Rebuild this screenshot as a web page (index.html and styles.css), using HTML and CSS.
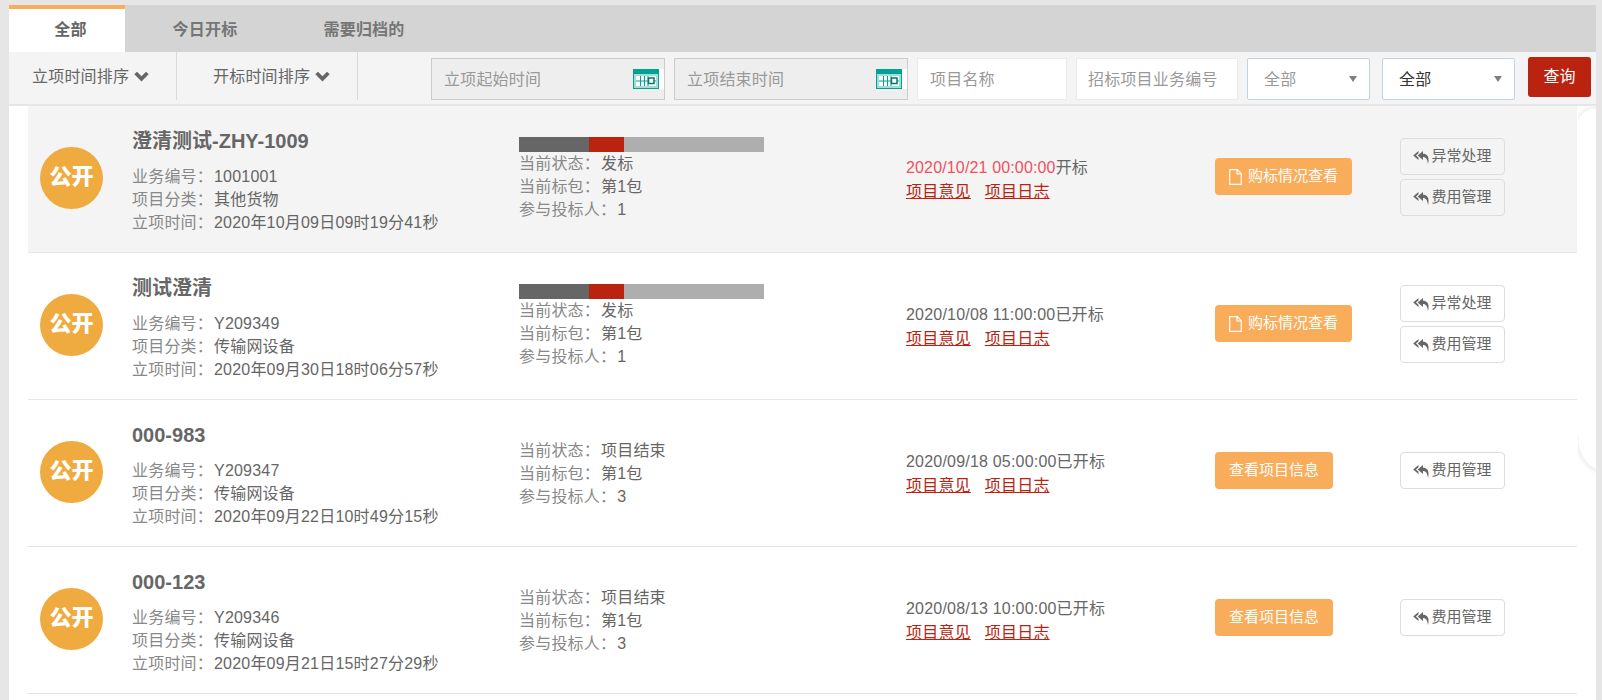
FILE: index.html
```html
<!DOCTYPE html>
<html lang="zh-CN">
<head>
<meta charset="utf-8">
<title>项目列表</title>
<link rel="stylesheet" href="styles.css">
</head>
<body>
<svg class="defs" width="0" height="0" aria-hidden="true">
  <symbol id="i-chev" viewBox="0 0 14 10"><path d="M0.300 3 2.800 .5 7 4.700 11.200 .5 13.700 3 7 9.700z"/></symbol>
  <symbol id="i-cal" viewBox="0 0 26 20">
    <rect width="26" height="20" fill="#00a294"/>
    <rect x="1" y="5" width="24" height="14" fill="#a5dcd6"/>
    <rect x="3" y="7" width="20" height="10" fill="#fff"/>
    <path d="M3 12H23M7.500 7V17M11.500 7V17M15 7V17" stroke="#00a294" stroke-width="1"/>
    <rect x="15.500" y="9" width="5.500" height="5.500" fill="#fff" stroke="#00786e" stroke-width="1.500"/>
  </symbol>
  <symbol id="i-reply" viewBox="0 0 16 14"><path d="M5.500 1 .2 5.500 5.500 10V7.800L3 5.500 5.500 3.200zM10 1 4.700 5.500 10 10V7C13 7 14.300 9 15 14 16.500 8 15 3.800 10 3.800z" fill="currentColor"/></symbol>
  <symbol id="i-file" viewBox="0 0 13 16"><path d="M.7.700H8.300L12.300 4.700V15.300H.7zM8 .7V5H12.300" fill="none" stroke="currentColor" stroke-width="1.200"/></symbol>
</svg>
<main class="page">
  <nav class="tabs">
    <a class="tab tab-active">全部</a>
    <a class="tab tab-today">今日开标</a>
    <a class="tab tab-archive">需要归档的</a>
  </nav>
  <section class="filters">
    <div class="sort sort-first">立项时间排序 <svg class="chev"><use href="#i-chev"/></svg></div>
    <div class="sort sort-second">开标时间排序 <svg class="chev"><use href="#i-chev"/></svg></div>
    <div class="fields">
      <div class="field date">立项起始时间<svg class="cal"><use href="#i-cal"/></svg></div>
      <div class="field date">立项结束时间<svg class="cal"><use href="#i-cal"/></svg></div>
      <div class="field text name">项目名称</div>
      <div class="field text code">招标项目业务编号</div>
      <div class="field select sel-a">全部<i class="caret"></i></div>
      <div class="field select sel-b">全部<i class="caret"></i></div>
      <button class="query">查询</button>
    </div>
  </section>
  <section class="list">
    <article class="row row-hot">
      <div class="badge">公开</div>
      <div class="info">
        <h2>澄清测试-ZHY-1009</h2>
        <p><span>业务编号：</span>1001001</p>
        <p><span>项目分类：</span>其他货物</p>
        <p><span>立项时间：</span>2020年10月09日09时19分41秒</p>
      </div>
      <div class="state">
        <div class="bar"><i class="seg-a"></i><i class="seg-b"></i><i class="seg-c"></i></div>
        <p><span>当前状态：</span>发标</p>
        <p><span>当前标包：</span>第1包</p>
        <p><span>参与投标人：</span>1</p>
      </div>
      <div class="open">
        <p><em>2020/10/21 00:00:00</em>开标</p>
        <p class="links"><a>项目意见</a><a>项目日志</a></p>
      </div>
      <div class="main-act"><a class="btn-main"><svg class="file"><use href="#i-file"/></svg>购标情况查看</a></div>
      <div class="side-act">
        <a class="btn-side"><svg class="reply"><use href="#i-reply"/></svg>异常处理</a>
        <a class="btn-side"><svg class="reply"><use href="#i-reply"/></svg>费用管理</a>
      </div>
    </article>
    <article class="row">
      <div class="badge">公开</div>
      <div class="info">
        <h2>测试澄清</h2>
        <p><span>业务编号：</span>Y209349</p>
        <p><span>项目分类：</span>传输网设备</p>
        <p><span>立项时间：</span>2020年09月30日18时06分57秒</p>
      </div>
      <div class="state">
        <div class="bar"><i class="seg-a"></i><i class="seg-b"></i><i class="seg-c"></i></div>
        <p><span>当前状态：</span>发标</p>
        <p><span>当前标包：</span>第1包</p>
        <p><span>参与投标人：</span>1</p>
      </div>
      <div class="open">
        <p>2020/10/08 11:00:00已开标</p>
        <p class="links"><a>项目意见</a><a>项目日志</a></p>
      </div>
      <div class="main-act"><a class="btn-main"><svg class="file"><use href="#i-file"/></svg>购标情况查看</a></div>
      <div class="side-act">
        <a class="btn-side"><svg class="reply"><use href="#i-reply"/></svg>异常处理</a>
        <a class="btn-side"><svg class="reply"><use href="#i-reply"/></svg>费用管理</a>
      </div>
    </article>
    <article class="row row-done">
      <div class="badge">公开</div>
      <div class="info">
        <h2>000-983</h2>
        <p><span>业务编号：</span>Y209347</p>
        <p><span>项目分类：</span>传输网设备</p>
        <p><span>立项时间：</span>2020年09月22日10时49分15秒</p>
      </div>
      <div class="state">
        <p><span>当前状态：</span>项目结束</p>
        <p><span>当前标包：</span>第1包</p>
        <p><span>参与投标人：</span>3</p>
      </div>
      <div class="open">
        <p>2020/09/18 05:00:00已开标</p>
        <p class="links"><a>项目意见</a><a>项目日志</a></p>
      </div>
      <div class="main-act"><a class="btn-main">查看项目信息</a></div>
      <div class="side-act">
        <a class="btn-side"><svg class="reply"><use href="#i-reply"/></svg>费用管理</a>
      </div>
    </article>
    <article class="row row-done">
      <div class="badge">公开</div>
      <div class="info">
        <h2>000-123</h2>
        <p><span>业务编号：</span>Y209346</p>
        <p><span>项目分类：</span>传输网设备</p>
        <p><span>立项时间：</span>2020年09月21日15时27分29秒</p>
      </div>
      <div class="state">
        <p><span>当前状态：</span>项目结束</p>
        <p><span>当前标包：</span>第1包</p>
        <p><span>参与投标人：</span>3</p>
      </div>
      <div class="open">
        <p>2020/08/13 10:00:00已开标</p>
        <p class="links"><a>项目意见</a><a>项目日志</a></p>
      </div>
      <div class="main-act"><a class="btn-main">查看项目信息</a></div>
      <div class="side-act">
        <a class="btn-side"><svg class="reply"><use href="#i-reply"/></svg>费用管理</a>
      </div>
    </article>
  </section>
  <i class="edge edge-top"></i>
  <i class="edge edge-mid"></i>
</main>
</body>
</html>
```
FILE: styles.css
```css
* { box-sizing: border-box; }
html, body { height: 100%; }
body {
  margin: 0;
  height: 700px;
  overflow: hidden;
  background: #e6e6e6;
  padding: 5px 6px 0 9px;
  color: #666;
  font: 16px/23px "Liberation Sans", "Noto Sans CJK SC", sans-serif;
  letter-spacing: .2px;
}
.defs { position: absolute; }
p, h2 { margin: 0; font-weight: normal; }
em { font-style: normal; }
a { display: block; }
.page { position: relative; background: #fff; height: 695px; overflow: hidden; }

.tabs { display: flex; height: 47px; background: #d4d4d4; }
.tab {
  padding-top: 12px;
  text-align: center;
  line-height: 26px;
  font-weight: bold;
  color: #767676;
}
.tab-active {
  width: 116px;
  padding: 8px 0 0 7px;
  background: #fff;
  border-top: 4px solid #f9ac5a;
  color: #666;
}
.tab-today { width: 160px; }
.tab-archive { width: 158px; }

.filters {
  display: flex;
  height: 54px;
  background: #f4f4f4;
  border-bottom: 2px solid #e6e6e6;
}
.sort { height: 48px; border-right: 1px solid #d9d9d9; line-height: 50px; white-space: nowrap; }
.sort-first { width: 168px; padding-left: 23px; }
.sort-second { width: 181px; padding-left: 36px; }
.chev { width: 15px; height: 11px; fill: #666; vertical-align: 0; }
.fields { display: flex; gap: 9px; margin-left: 73px; padding-top: 6px; }
.field {
  height: 42px;
  line-height: 42px;
  color: #999;
  position: relative;
  white-space: nowrap;
}
.date { width: 234px; background: #eee; border: 1px solid #ccc; padding-left: 12px; }
.cal {
  box-sizing: content-box;
  position: absolute;
  right: 0;
  top: 10px;
  width: 26px;
  height: 20px;
  border-right: 5px solid #fff;
}
.text { background: #fff; border: 1px solid #eaeaea; padding-left: 12px; }
.name { width: 150px; }
.code { width: 162px; padding-left: 11px; }
.select {
  background: #fff;
  border: 1px solid #c5d2df;
  border-radius: 2px;
  padding-left: 16px;
}
.sel-a { width: 123px; }
.sel-b { width: 133px; margin-left: 3px; color: #333; }
.caret {
  position: absolute;
  right: 12px;
  top: 17px;
  border: 4px solid transparent;
  border-top: 6px solid #7f7f7f;
  border-bottom: 0;
}
.query {
  width: 63px;
  height: 40px;
  margin-left: 4px;
  margin-top: -1px;
  padding: 0;
  border: 0;
  border-radius: 3px;
  background: #b92310;
  color: #fff;
  font: inherit;
  line-height: 40px;
}

.list { padding: 0 19px; }
.row {
  display: flex;
  height: 147px;
  width: 1549px;
  border-bottom: 1px solid #e6e6e6;
  align-items: flex-start;
}
.row-hot { background: #f4f4f4; }
.badge {
  flex: none;
  width: 63px;
  height: 62px;
  margin: 41px 0 0 12px;
  border-radius: 50%;
  background: #efab3f;
  color: #fff;
  font-size: 22px;
  font-weight: 900;
  line-height: 60px;
  text-align: center;
  letter-spacing: 0;
}
.info { width: 387px; margin-left: 29px; padding-top: 21px; }
.info h2 { font-size: 20px; line-height: 28px; font-weight: bold; margin-bottom: 10px; letter-spacing: 0; }
.info p, .state p { white-space: nowrap; }
p span { color: #888; margin-right: 1px; }
.state { width: 387px; padding-top: 31px; }
.row-done .state { padding-top: 39px; }
.bar { display: flex; width: 245px; height: 15px; }
.bar i { display: block; height: 15px; }
.seg-a { width: 70px; background: #666; }
.seg-b { width: 35px; background: #b92310; }
.seg-c { width: 140px; background: #aeaeae; }
.open { width: 309px; padding-top: 50px; line-height: 24px; }
.open em { color: #ef5060; letter-spacing: .15px; }
.links { display: flex; gap: 14px; }
.links a { color: #b92310; text-decoration: underline; }
.main-act { width: 185px; padding-top: 52px; }
.btn-main {
  display: inline-block;
  height: 37px;
  padding: 0 14px;
  border-radius: 4px;
  background: #f9ac5a;
  color: #fff;
  font-size: 15px;
  letter-spacing: 0;
  line-height: 35px;
  white-space: nowrap;
}
.file { width: 13px; height: 16px; margin-right: 6px; vertical-align: -4px; color: #fff; }
.side-act { display: flex; flex-direction: column; gap: 4px; padding-top: 32px; width: 105px; }
.row-done .side-act { padding-top: 52px; }
.btn-side {
  display: block;
  width: 105px;
  height: 37px;
  border: 1px solid #ddd;
  border-radius: 4px;
  font-size: 15px;
  letter-spacing: 0;
  line-height: 33px;
  text-align: center;
  white-space: nowrap;
}
.reply { width: 16px; height: 14px; color: #666; vertical-align: -3px; margin-right: 2px; }

.edge { position: absolute; left: 1569px; width: 18px; }
.edge-top {
  top: 101px;
  height: 22px;
  background: radial-gradient(circle at 100% 100%, #fff 19px, #f1f1f1 20px, #fff 24px);
}
.edge-mid {
  top: 430px;
  height: 45px;
  background: radial-gradient(circle at 33px 5px, #fff 32px, #f1f1f1 33px, #fff 38px);
}
```
